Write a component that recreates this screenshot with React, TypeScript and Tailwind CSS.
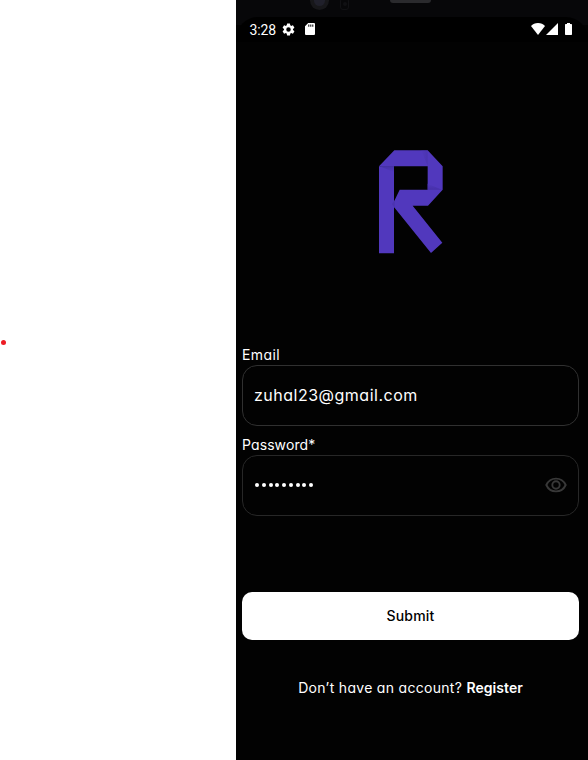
function StatusBar() {
  return (
    <div className="flex h-[25px] shrink-0 items-center rounded-t-[22px] bg-black pl-[13.5px] pr-[16.500px] font-['Roboto',sans-serif]">
      <span className="w-[27px] whitespace-nowrap pt-px text-[14px] leading-[25px] tracking-[-0.1px]">3:28</span>
      <svg className="ml-[4px] size-[15px]" viewBox="0 0 24 24" fill="currentColor">
        <path d="M19.14 12.94c.04-.3.06-.61.06-.94s-.02-.64-.07-.94l2.03-1.58a.49.49 0 0 0 .12-.61l-1.92-3.32a.49.49 0 0 0-.59-.22l-2.39.96a7 7 0 0 0-1.62-.94l-.36-2.54a.48.48 0 0 0-.48-.41h-3.84a.48.48 0 0 0-.47.41l-.36 2.54c-.59.24-1.13.57-1.62.94l-2.39-.96a.48.48 0 0 0-.59.22L2.74 8.87a.48.48 0 0 0 .12.61l2.03 1.58a7 7 0 0 0 0 1.88l-2.03 1.58a.49.49 0 0 0-.12.61l1.92 3.32c.12.22.37.29.59.22l2.39-.96c.5.38 1.03.7 1.62.94l.36 2.54c.05.24.24.41.48.41h3.84c.24 0 .44-.17.47-.41l.36-2.54a7 7 0 0 0 1.62-.94l2.39.96c.22.08.47 0 .59-.22l1.92-3.32a.48.48 0 0 0-.12-.61zM12 15.6a3.6 3.6 0 1 1 0-7.2 3.6 3.6 0 0 1 0 7.2z" />
      </svg>
      <svg className="mb-[1px] ml-[9px] h-[12px] w-[10px]" viewBox="0 0 10 12" fill="currentColor">
        <path fillRule="evenodd" d="M3.2 0H9a1 1 0 0 1 1 1v10a1 1 0 0 1-1 1H1a1 1 0 0 1-1-1V3.200zM3.300 1.500v2.300h1V1.500zm2 0v2.300h1V1.500zm2 0v2.300h1V1.500z" />
      </svg>
      <div className="mb-[1px] ml-auto flex">
        <svg className="h-[12px] w-[14px]" viewBox="0 0 14 12" fill="currentColor">
          <path d="M0 3C1.600 1.100 4.200 0 7 0s5.400 1.100 7 3L7 12z" />
        </svg>
        <svg className="ml-[1px] size-[12px]" viewBox="0 0 12 12" fill="currentColor">
          <path d="M12 0v12H0z" />
        </svg>
        <svg className="ml-[7px] h-[12px] w-[7px]" viewBox="0 0 7 12" fill="currentColor">
          <path d="M2 0h3v1h1.300q.7 0 .7.700v9.600q0 .7-.7.700H.7Q0 12 0 11.300V1.700Q0 1 .7 1H2z" />
        </svg>
      </div>
    </div>
  );
}

function Logo() {
  return (
    <svg className="mx-auto h-[106px] w-[66px]" viewBox="54 42 198 318">
      <defs>
        <linearGradient id="foldTop" x1="0" y1="0" x2="0" y2="1">
          <stop offset="0" stopColor="#4632a8" />
          <stop offset="1" stopColor="#5138bd" />
        </linearGradient>
        <linearGradient id="foldSide" x1="1" y1="0" x2="0" y2="0">
          <stop offset="0" stopColor="#4b34b0" />
          <stop offset="1" stopColor="#5138bd" />
        </linearGradient>
        <linearGradient id="foldLow" x1="0" y1="1" x2="0" y2="0">
          <stop offset="0" stopColor="#4630a8" />
          <stop offset="1" stopColor="#5138bd" />
        </linearGradient>
      </defs>
      <g fill="#5138bd">
        <path d="M57 94H102V355H57z" />
        <path d="M57 94L103 46H203L248 94V164L204 212H158L247 323L213 354L97 210L119 164H203V94z" />
      </g>
      <path d="M59 94H102V112z" fill="url(#foldTop)" />
      <path d="M184 47H203V93z" fill="url(#foldSide)" />
      <path d="M203 146L246 164H203z" fill="url(#foldLow)" />
      <path d="M96 207L104 196V218z" fill="#4b34b0" />
    </svg>
  );
}

function EyeIcon() {
  return (
    <svg className="h-[16px] w-[22px]" viewBox="0 0 22 16" fill="none" stroke="#383838" strokeWidth="1.9">
      <path d="M1.300 8C3.200 3.900 6.700 1.600 11 1.600S18.800 3.900 20.700 8C18.800 12.100 15.300 14.400 11 14.400S3.200 12.100 1.300 8z" />
      <circle cx="11" cy="8" r="3.700" />
    </svg>
  );
}

export default function App() {
  return (
    <div className="flex h-[760px] w-[588px] overflow-hidden bg-white font-['Inter',sans-serif] text-white [font-feature-settings:'cv11']">
      <aside className="flex w-[236px] shrink-0 pt-[340px]">
        <span className="ml-[1px] size-[5px] rounded-full bg-[#ed1c24]" />
      </aside>
      <main className="flex w-[352px] flex-col bg-[#020202]">
        <div className="-mb-[8px] flex h-[25px] shrink-0 items-start overflow-hidden bg-[#070709]">
          <div className="-mt-[9px] ml-[74px] flex size-[19px] items-center justify-center rounded-full bg-[#17171a]">
            <span className="size-[11px] rounded-full bg-[#20202b]" />
          </div>
          <div className="-mt-[2px] ml-[11px] flex h-[12px] w-[9px] items-center justify-center rounded-[3px] border border-[#111114]">
            <span className="size-[4px] rounded-full bg-[#101013]" />
          </div>
          <div className="-mt-px ml-[41px] h-[4px] w-[41px] rounded-b-[3px] bg-[#2a2a2d]" />
        </div>
        <StatusBar />
        <div className="mt-[107px] pr-[2px]">
          <Logo />
        </div>
        <form className="mt-[92px] flex flex-col pl-[6px] pr-[9px]">
          <label className="h-[18px] text-[14px] leading-[15px] tracking-[0.4px]">Email</label>
          <div className="flex h-[61px] items-center rounded-[15px] border border-[#303030] pb-[1px] pl-[11px]">
            <span className="text-[16px] tracking-[0.5px]">zuhal23@gmail.com</span>
          </div>
          <label className="mt-[11px] h-[18px] text-[14px] leading-[15px] tracking-[0.1px]">Password*</label>
          <div className="flex h-[61px] items-center rounded-[15px] border border-[#272727] pb-[2px] pl-[12px] pr-[11px]">
            <div className="flex gap-[2.750px]">
              {Array.from({ length: 9 }, (_, i) => (
                <span key={i} className="size-[4px] rounded-full bg-white" />
              ))}
            </div>
            <span className="ml-auto"><EyeIcon /></span>
          </div>
          <button type="button" className="mt-[76px] h-[48px] rounded-[10px] bg-white pb-[2px] text-[14px] font-medium tracking-[0.2px] text-black">Submit</button>
        </form>
        <p className="mt-[38px] whitespace-nowrap pr-[3px] text-center text-[14px] leading-[20px] tracking-[0.3px]">
          Don’t have an account? <span className="font-semibold tracking-[0.05px]">Register</span>
        </p>
      </main>
    </div>
  );
}
